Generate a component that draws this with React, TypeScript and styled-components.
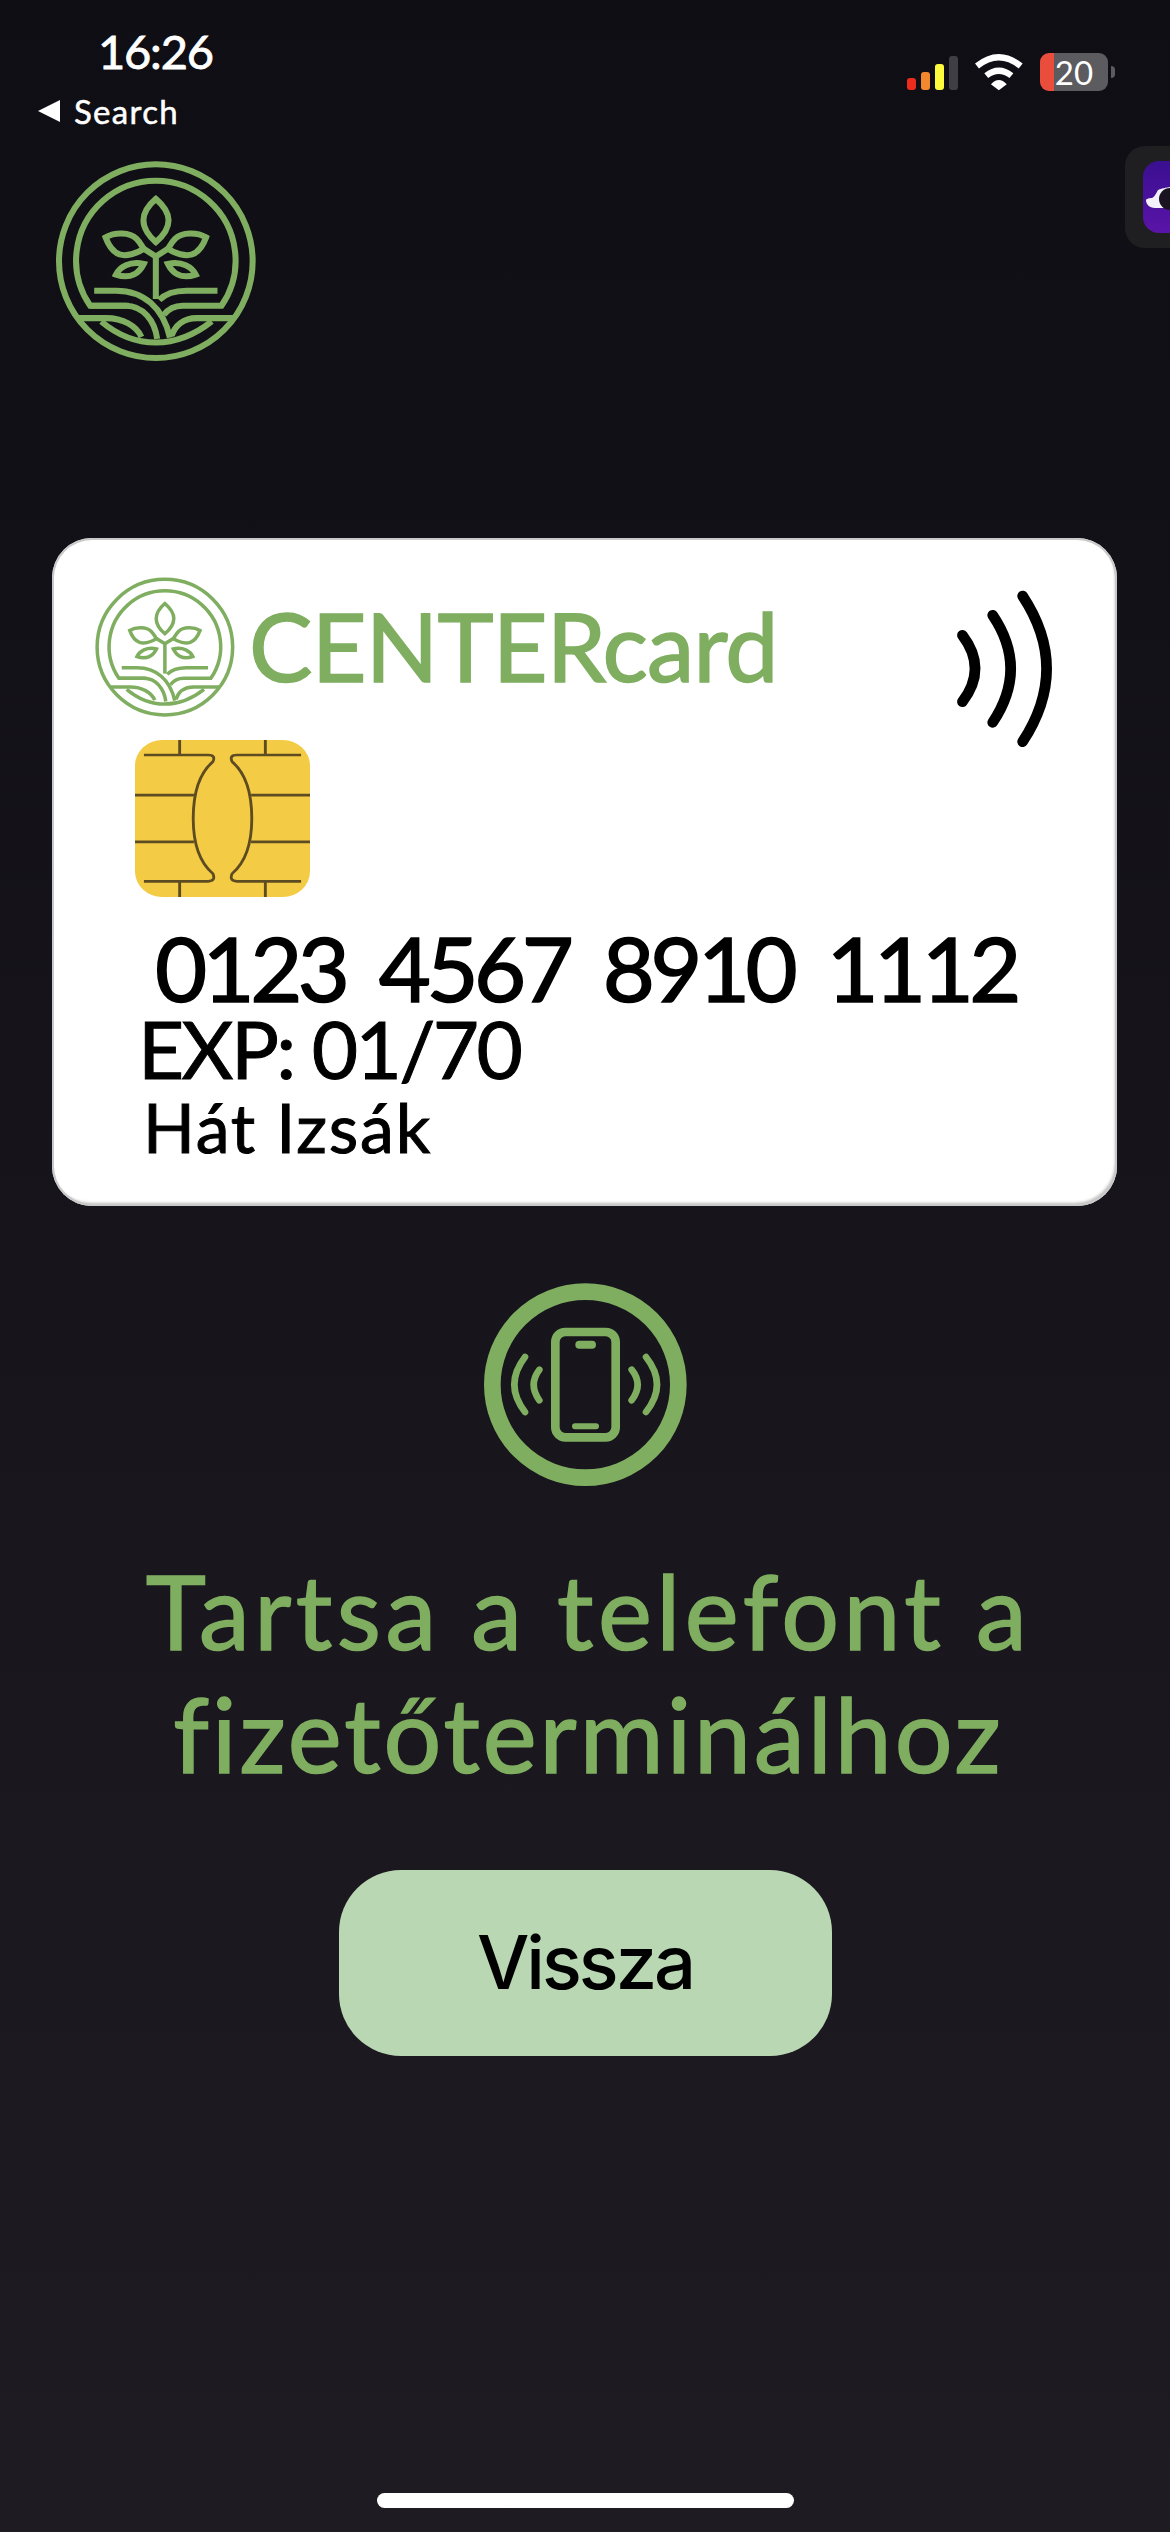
import React from "react";
import styled, { createGlobalStyle } from "styled-components";

const comic = `"Comic Sans MS", "Lato", sans-serif`;
const green = "#7fae60";

const Global = createGlobalStyle`
  html, body { margin: 0; padding: 0; background: #0f0e14; }
`;

const Page = styled.main`
  position: relative;
  width: 1170px;
  height: 2532px;
  overflow: hidden;
  display: flex;
  flex-direction: column;
  background: linear-gradient(180deg, #0f0e14 0%, #1f1b23 100%);
  font-family: ${comic};
`;

const StatusBar = styled.header`
  height: 161px;
  display: flex;
  justify-content: space-between;
  align-items: flex-start;
  flex-shrink: 0;
`;

const StatusLeft = styled.div`
  display: flex;
  flex-direction: column;
  padding: 25px 0 0 38px;
`;

const Time = styled.div`
  margin-left: 60px;
  height: 52px;
  line-height: 52px;
  font-size: 47px;
  color: #fff;
  letter-spacing: -1.2px;
  -webkit-text-stroke: 0.8px #fff;
`;

const BackLink = styled.div`
  margin-top: 14px;
  display: flex;
  align-items: center;
  gap: 14px;
  height: 40px;
  line-height: 40px;
  font-size: 33px;
  color: #fff;
  letter-spacing: 1.3px;
  -webkit-text-stroke: 0.5px #fff;
`;

const BackArrow = styled.span`
  width: 0;
  height: 0;
  border-style: solid;
  border-width: 11px 22px 11px 0;
  border-color: transparent #fff transparent transparent;
`;

const StatusRight = styled.div`
  display: flex;
  align-items: flex-end;
  padding: 53px 62px 0 0;
`;

const SignalBars = styled.div`
  display: flex;
  align-items: flex-end;
  gap: 5px;
  height: 35px;
  margin-right: 17px;
  margin-bottom: 1px;
`;

const Bar = styled.span<{ $h: number; $c: string }>`
  width: 9px;
  height: ${(p) => p.$h}px;
  background: ${(p) => p.$c};
  border-radius: 3px;
`;

const Battery = styled.div`
  position: relative;
  margin-left: 17px;
  width: 68px;
  height: 38px;
  border-radius: 9px;
  background: linear-gradient(90deg, #eb4d3d 0 14px, #5c5b60 14px 100%);
  color: #fff;
  font-size: 33px;
  line-height: 38px;
  text-align: center;
`;

const BatteryNub = styled.span`
  position: absolute;
  left: 71px;
  top: 13px;
  width: 4px;
  height: 12px;
  border-radius: 0 6px 6px 0;
  background: #5c5b60;
`;

const SideTab = styled.aside`
  position: absolute;
  right: 0;
  top: 146px;
  width: 45px;
  height: 102px;
  border-radius: 20px 0 0 20px;
  background: #1f1f22;
  display: flex;
  align-items: center;
  justify-content: flex-end;
`;

const SideApp = styled.div`
  width: 27px;
  height: 72px;
  border-radius: 16px 0 0 16px;
  background: linear-gradient(180deg, #3a0f90 0%, #5a14a8 100%);
  overflow: hidden;
  display: flex;
`;

const BrandMark = styled.svg<{ $size: number }>`
  width: ${(p) => p.$size}px;
  height: ${(p) => p.$size}px;
  flex-shrink: 0;
  display: block;
`;

const TopLogoWrap = styled.div`
  margin-left: 56px;
  height: 377px;
  flex-shrink: 0;
`;

const Card = styled.section`
  margin-left: 52px;
  width: 1065px;
  height: 668px;
  flex-shrink: 0;
  box-sizing: border-box;
  background: #fff;
  border-radius: 40px;
  box-shadow: inset 0 0 0 2px #c9c9c9, inset -2px -3px 3px #bdbdbd;
  padding: 39px 57px 0 43px;
  display: flex;
  flex-direction: column;
`;

const CardHeader = styled.div`
  display: flex;
  align-items: flex-start;
  height: 163px;
`;

const CardBrand = styled.div`
  margin-left: 14px;
  margin-top: 18px;
  font-size: 95px;
  line-height: 100px;
  color: ${green};
  letter-spacing: -0.8px;
  -webkit-text-stroke: 1.5px ${green};
  white-space: nowrap;
`;

const Contactless = styled.svg`
  width: 110px;
  height: 163px;
  margin-left: auto;
  margin-top: 10px;
  flex-shrink: 0;
`;

const Chip = styled.svg`
  width: 175px;
  height: 157px;
  margin-left: 40px;
  display: block;
  flex-shrink: 0;
`;

const CardNumber = styled.div`
  margin-top: 31px;
  margin-left: 60px;
  height: 78px;
  line-height: 78px;
  font-size: 90px;
  color: #000;
  letter-spacing: -4.6px;
  word-spacing: 15px;
  white-space: nowrap;
  -webkit-text-stroke: 1.5px #000;
`;

const CardExpiry = styled.div`
  margin-top: 6px;
  margin-left: 43px;
  height: 72px;
  line-height: 72px;
  font-size: 80px;
  color: #000;
  letter-spacing: -2.6px;
  white-space: nowrap;
  -webkit-text-stroke: 1px #000;
`;

const CardHolder = styled.div`
  margin-top: 13px;
  margin-left: 48px;
  height: 60px;
  line-height: 60px;
  font-size: 68px;
  color: #000;
  letter-spacing: 1.8px;
  white-space: nowrap;
  -webkit-text-stroke: 1px #000;
`;

const Prompt = styled.section`
  display: flex;
  flex-direction: column;
  align-items: center;
  margin-top: 77px;
`;

const PhoneIcon = styled.svg`
  width: 203px;
  height: 203px;
  display: block;
`;

const Heading = styled.h1`
  margin: 63px 0 0;
  padding-left: 7px;
  text-align: center;
  font-size: 102px;
  font-weight: 400;
  line-height: 123px;
  color: ${green};
  -webkit-text-stroke: 1.5px ${green};
`;

const HeadingLine = styled.span<{ $spacing: number }>`
  display: block;
  letter-spacing: ${(p) => p.$spacing}px;
`;

const BackButton = styled.button`
  margin-top: 75px;
  width: 493px;
  height: 186px;
  border: 0;
  border-radius: 62px;
  background: #b9d7b2;
  color: #000;
  font-family: "Inter", sans-serif;
  font-size: 74px;
  font-weight: 500;
  letter-spacing: -3px;
  padding: 0 0 2px;
`;

const HomeBar = styled.div`
  position: absolute;
  left: 377px;
  bottom: 24px;
  width: 417px;
  height: 15px;
  border-radius: 8px;
  background: #fff;
`;

const Logo = ({ size, sw }: { size: number; sw: number }) => (
  <BrandMark $size={size} viewBox="170 483 597 597" fill="none" stroke={green} strokeWidth={sw}>
    <circle cx="468" cy="782" r="289" />
    <path d="M388 915H272A238 238 0 1 1 664 915H548C525 915 505 925 492 942" />
    <path d="M272 915H378C430 915 465 960 472 1014" />
    <path d="M284 870H350C430 870 490 920 510 1010" />
    <path d="M652 870H560C525 870 495 880 478 898" />
    <path d="M468 762V895" />
    <path d="M236 952H320C370 952 410 975 425 1008" />
    <path d="M700 952H590C550 952 525 975 515 1005" />
    <path d="M305 962Q380 1025 468 1025Q555 1025 635 962" />
    <path d="M468 596C440 620 431 640 431 660C431 685 450 710 468 725C486 710 506 685 506 660C506 640 496 620 468 596Z" />
    <path d="M318 711C345 695 390 695 410 715C420 725 425 735 432 745C410 760 380 768 360 762C340 755 325 730 318 711Z" />
    <path d="M432 745L468 768" />
    <path d="M349 822C360 800 390 780 432 790C420 815 395 838 349 822Z" />
    <g transform="translate(936 0) scale(-1 1)">
      <path d="M318 711C345 695 390 695 410 715C420 725 425 735 432 745C410 760 380 768 360 762C340 755 325 730 318 711Z" />
      <path d="M432 745L468 768" />
      <path d="M349 822C360 800 390 780 432 790C420 815 395 838 349 822Z" />
    </g>
  </BrandMark>
);

const WifiIcon = () => (
  <svg width="48" height="38" viewBox="375 105 145 112" fill="none" stroke="#fff" strokeWidth="19">
    <path d="M381 143Q447 90 513 143" />
    <path d="M409 172Q447 142 485 172" />
    <path d="M423 198Q447 172 471 198L447 216Z" fill="#fff" stroke="none" />
  </svg>
);

export default function App() {
  return (
    <Page>
      <Global />
      <StatusBar>
        <StatusLeft>
          <Time>16:26</Time>
          <BackLink>
            <BackArrow />
            Search
          </BackLink>
        </StatusLeft>
        <StatusRight>
          <SignalBars>
            <Bar $h={12} $c="#ee2c1e" />
            <Bar $h={18} $c="#f2882d" />
            <Bar $h={26} $c="#fcfb3c" />
            <Bar $h={34} $c="#3f3e43" />
          </SignalBars>
          <WifiIcon />
          <Battery>
            20
            <BatteryNub />
          </Battery>
        </StatusRight>
      </StatusBar>
      <SideTab>
        <SideApp>
          <svg width="27" height="72" viewBox="0 0 27 72">
            <path d="M9 37C11 36 13 33 15 29C17 28 20 27 27 26V47H12C6 47 3 43 3 39C3 38 6 37 9 37Z" fill="#f4f1fa" />
            <circle cx="27" cy="38" r="11" fill="#1a1320" />
          </svg>
        </SideApp>
      </SideTab>
      <TopLogoWrap>
        <Logo size={200} sw={18} />
      </TopLogoWrap>
      <Card>
        <CardHeader>
          <Logo size={140} sw={15} />
          <CardBrand>CENTERcard</CardBrand>
          <Contactless viewBox="150 200 330 490" fill="none" stroke="#000" strokeWidth="32" strokeLinecap="round">
            <path d="M187 345Q263 445 187 545" />
            <path d="M278 285Q386 445 278 607" />
            <path d="M368 227Q512 445 368 665" />
          </Contactless>
        </CardHeader>
        <Chip viewBox="265 660 490 470" preserveAspectRatio="none">
          <rect x="265" y="660" width="490" height="470" rx="76" fill="#f4cb45" />
          <g fill="none" stroke="#5d4c22" strokeWidth="8">
            <path d="M290 705H470Q492 705 483 725C450 755 428 810 428 895C428 980 450 1030 483 1060Q492 1082 470 1083H290" />
            <path d="M730 705H550Q528 705 537 725C570 755 592 810 592 895C592 980 570 1030 537 1060Q528 1082 550 1083H730" />
            <path d="M265 825H430M265 965H430M590 825H755M590 965H755" />
            <path d="M390 660V705M630 660V705M390 1083V1130M630 1083V1130" />
          </g>
        </Chip>
        <CardNumber>0123 4567 8910 1112</CardNumber>
        <CardExpiry>EXP: 01/70</CardExpiry>
        <CardHolder>Hát Izsák</CardHolder>
      </Card>
      <Prompt>
        <PhoneIcon viewBox="99 68 609 609" fill="none" stroke={green} strokeLinecap="round">
          <circle cx="403" cy="373" r="279" strokeWidth="50" />
          <rect x="313" y="215" width="181" height="316" rx="30" strokeWidth="26" />
          <path d="M385 253H423" strokeWidth="24" />
          <path d="M372 498H435" strokeWidth="18" />
          <path d="M222 290Q158 373 222 455M265 328Q231 373 265 420M585 290Q651 373 585 455M542 328Q578 373 542 420" strokeWidth="20" />
        </PhoneIcon>
        <Heading>
          <HeadingLine $spacing={4.5}>Tartsa a telefont a</HeadingLine>
          <HeadingLine $spacing={3}>fizetőterminálhoz</HeadingLine>
        </Heading>
        <BackButton>Vissza</BackButton>
      </Prompt>
      <HomeBar />
    </Page>
  );
}
